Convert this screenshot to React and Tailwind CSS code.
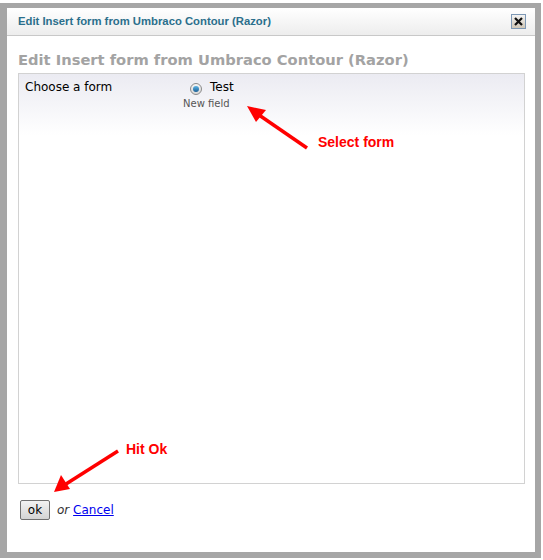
export default function App() {
  return (
    <div className="relative h-[560px] w-[543px] bg-white pt-[3px]">
      <div className="flex h-[555px] w-[541px] flex-col border-[6px] border-l-[7px] border-t-[5px] border-[#a6a6a6] bg-white">
        {/* title bar */}
        <div className="flex h-[28px] items-center justify-between border-b border-[#c8c8c8] bg-gradient-to-b from-white to-[#ededed] pl-[11px] pr-[9px]">
          <span className="font-['Liberation_Sans',sans-serif] text-[11.3px] font-bold text-[#2b6f8c]">
            Edit Insert form from Umbraco Contour (Razor)
          </span>
          <button className="flex h-[15px] w-[15px] items-center justify-center border border-[#7d98b5] bg-gradient-to-b from-[#f4f4f4] to-[#cfc6b6]">
            <svg width="9" height="9" viewBox="0 0 9 9">
              <path d="M1 1 L8 8 M8 1 L1 8" stroke="#111" strokeWidth="2.2" />
            </svg>
          </button>
        </div>

        <div className="flex flex-1 flex-col pl-[11px] pr-[10px]">
          <h1 className="pt-[14px] pb-[3px] font-['DejaVu_Sans',sans-serif] text-[14.7px] font-bold leading-[20px] text-[#a3a3a3]">
            Edit Insert form from Umbraco Contour (Razor)
          </h1>

          <div className="h-[411px] border border-[#d2d2d2] bg-gradient-to-b from-[#ebebf2] via-white via-[15%] to-white">
            <div className="flex pt-[5px] pl-[6px] font-['DejaVu_Sans',sans-serif] text-[12px] text-black">
              <div className="w-[158px] leading-[16px]">Choose a form</div>
              <div className="flex flex-col">
                <div className="flex items-start">
                  <span className="ml-[7px] mt-[4px] flex h-[12px] w-[12px] items-center justify-center rounded-full border border-[#8a8a8a] bg-gradient-to-b from-[#f5f5f5] to-[#d8d8d8]">
                    <span className="h-[6px] w-[6px] rounded-full bg-gradient-to-b from-[#5bb4e6] to-[#1b5f95]" />
                  </span>
                  <span className="ml-[8px] leading-[16px]">Test</span>
                </div>
                <span className="mt-[2px] text-[10px] leading-[13px] text-[#555]">New field</span>
              </div>
            </div>
          </div>

          <div className="mt-[16px] flex items-center gap-[7px] pl-[2px] font-['DejaVu_Sans',sans-serif] text-[12px]">
            <button className="h-[20px] w-[30px] rounded-[2px] border border-[#707070] bg-gradient-to-b from-[#f2f2f2] to-[#d4d4d4] text-[12px] leading-[16px] text-black">
              ok
            </button>
            <span>
              <span className="italic text-[#333]">or</span>{" "}
              <a href="#" className="text-[#0000ee] underline">Cancel</a>
            </span>
          </div>
        </div>
      </div>

      {/* annotations */}
      <svg className="absolute left-0 top-0" width="543" height="560" viewBox="0 0 543 560">
        <path d="M307 148 L259 115" stroke="#ff0000" strokeWidth="3.5" />
        <path d="M247 106 L266 110 L256 122 Z" fill="#ff0000" />
        <path d="M118 451 L66 484" stroke="#ff0000" strokeWidth="3.5" />
        <path d="M54 492 L61 475 L70 489 Z" fill="#ff0000" />
      </svg>
      <span className="absolute left-[318px] top-[132px] font-['Liberation_Sans',sans-serif] text-[14px] font-bold text-[#ff0000]">
        Select form
      </span>
      <span className="absolute left-[126px] top-[439px] font-['Liberation_Sans',sans-serif] text-[14px] font-bold text-[#ff0000]">
        Hit Ok
      </span>
    </div>
  );
}
